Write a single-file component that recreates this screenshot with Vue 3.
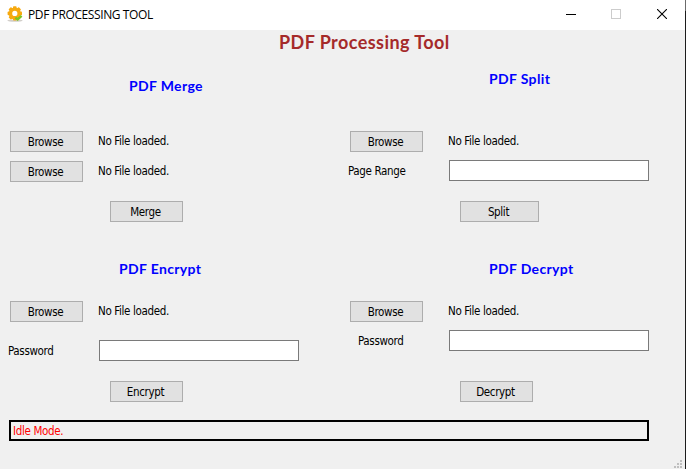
<script setup>
import { ref } from 'vue'

const range = ref('')
const encryptPassword = ref('')
const decryptPassword = ref('')
const fileText = ref('No File loaded.')
</script>

<template>
  <div class="window">
    <header class="titlebar">
      <svg class="app-icon" width="16" height="16" viewBox="0 0 16 16">
        <ellipse cx="8" cy="14.6" rx="7.6" ry="1.1" fill="#d2cfca" />
        <g fill="#f6a90f">
          <rect x="6" y="0.2" width="3.6" height="14.4" rx="0.8" />
          <rect x="6" y="0.2" width="3.6" height="14.4" rx="0.8" transform="rotate(45 7.8 7.4)" />
          <rect x="6" y="0.2" width="3.6" height="14.4" rx="0.8" transform="rotate(90 7.8 7.4)" />
          <rect x="6" y="0.2" width="3.6" height="14.4" rx="0.8" transform="rotate(135 7.8 7.4)" />
        </g>
        <circle cx="7.8" cy="7.4" r="4.3" fill="#fff" stroke="#f6a90f" stroke-width="3.4" />
        <path d="M8.3 11.6 L10.6 13.4 L14.6 9.9" fill="none" stroke="#7cc520" stroke-width="2.4" />
      </svg>
      <span class="title">PDF PROCESSING TOOL</span>
      <div class="controls">
        <svg width="10" height="10" viewBox="0 0 10 10" shape-rendering="crispEdges"><path d="M0 5.5H10" stroke="#000" /></svg>
        <svg width="10" height="10" viewBox="0 0 10 10"><rect x="0.5" y="0.5" width="9" height="9" fill="none" stroke="#ccc" /></svg>
        <svg class="close" width="10" height="10" viewBox="0 0 10 10"><path d="M0 0L10 10M10 0L0 10" stroke="#000" stroke-width="1.1" /></svg>
      </div>
    </header>

    <h1>PDF Processing Tool</h1>

    <main class="panels">
      <section class="panel">
        <h2 class="merge-head">PDF Merge</h2>
        <div class="row"><button>Browse</button><span class="file">{{ fileText }}</span></div>
        <div class="row second"><button>Browse</button><span class="file">{{ fileText }}</span></div>
        <div class="action merge-action"><button>Merge</button></div>
      </section>
      <section class="panel">
        <h2 class="split-head">PDF Split</h2>
        <div class="row"><button>Browse</button><span class="file wide">{{ fileText }}</span></div>
        <div class="row field"><label class="range">Page Range</label><input v-model="range" type="text" /></div>
        <div class="action split-action"><button class="split">Split</button></div>
      </section>
      <section class="panel">
        <h2 class="encrypt-head">PDF Encrypt</h2>
        <div class="row"><button>Browse</button><span class="file">{{ fileText }}</span></div>
        <div class="row field low"><label class="pass">Password</label><input v-model="encryptPassword" type="password" /></div>
        <div class="action encrypt-action"><button class="encrypt">Encrypt</button></div>
      </section>
      <section class="panel">
        <h2 class="decrypt-head">PDF Decrypt</h2>
        <div class="row"><button>Browse</button><span class="file wide">{{ fileText }}</span></div>
        <div class="row field"><label class="pass-right">Password</label><input v-model="decryptPassword" type="password" /></div>
        <div class="action decrypt-action"><button>Decrypt</button></div>
      </section>
    </main>

    <div class="status"><span>Idle Mode.</span></div>
    <svg class="grip" width="8" height="8" viewBox="0 0 8 8" fill="#bfbfbf" shape-rendering="crispEdges">
      <path d="M6 0h2v2h-2zM3 3h2v2h-2zM6 3h2v2h-2zM0 6h2v2h-2zM3 6h2v2h-2zM6 6h2v2h-2z" />
    </svg>
  </div>
</template>

<style>
body { margin: 0; overflow: hidden; }
</style>

<style scoped>
.window {
  box-sizing: border-box;
  width: 686px;
  height: 469px;
  display: flex;
  flex-direction: column;
  background: linear-gradient(#6b6b6b 11px, #1c1c1c 11px) right / 1px 100% no-repeat, #f0f0f0;
  font-family: "DejaVu Sans Condensed", "DejaVu Sans", sans-serif;
  font-stretch: condensed;
  font-size: 11.5px;
  letter-spacing: -0.35px;
  color: #000;
}
.titlebar {
  box-sizing: border-box;
  width: 685px;
  height: 30px;
  flex: none;
  display: flex;
  align-items: center;
  background: #fff;
  padding: 0 18px 0 7px;
}
.app-icon { margin-top: -3px; }
.title {
  margin: -2px 0 0 5px;
  font: 12px "Open Sans", sans-serif;
  letter-spacing: -0.4px;
  white-space: nowrap;
}
.controls { margin-left: auto; display: flex; gap: 35px; margin-top: -2px; }
.controls svg { display: block; }
.controls .close { margin-left: 1px; }
h1 {
  flex: none;
  height: 32px;
  margin: 0;
  padding-left: 279px;
  font: bold 18px/24px Lato, sans-serif;
  letter-spacing: 0.43px;
  color: #a52a2a;
}
.panels {
  flex: none;
  display: grid;
  grid-template-columns: 340px 345px;
  grid-template-rows: 190px 168px;
}
.panel { display: flex; flex-direction: column; }
h2 {
  flex: none;
  box-sizing: border-box;
  height: 69px;
  margin: 0;
  font: bold 14px/20px Lato, sans-serif;
  letter-spacing: 0.35px;
  color: #00f;
}
.merge-head { padding: 14px 0 0 129px; }
.split-head { padding: 7px 0 0 149px; }
.encrypt-head, .decrypt-head { height: 49px; padding-top: 7px; }
.encrypt-head { padding-left: 119px; }
.decrypt-head { padding-left: 149px; }
.row { display: flex; height: 21px; padding-left: 10px; }
.second { margin-top: 9px; }
.file { margin-left: 15px; line-height: 21px; white-space: nowrap; }
.file.wide { margin-left: 25px; }
button {
  box-sizing: border-box;
  width: 73px;
  height: 21px;
  padding: 1px 2px 0 0;
  border: 1px solid #adadad;
  border-radius: 0;
  background: #e1e1e1;
  color: #000;
  font: inherit;
  line-height: 19px;
  letter-spacing: inherit;
}
.row.field { margin-top: 8px; padding-left: 0; }
.row.low { margin-top: 18px; }
label { box-sizing: border-box; width: 109px; line-height: 23px; white-space: nowrap; }
.range { padding-left: 8px; }
.pass { width: 99px; padding-left: 8px; }
.pass-right { padding-left: 18px; }
input {
  box-sizing: border-box;
  width: 200px;
  height: 21px;
  padding: 1px 3px;
  border: 1px solid #7a7a7a;
  border-radius: 0;
  background: #fff;
  font: inherit;
  outline: none;
}
.action { display: flex; }
.merge-action { padding: 19px 0 0 110px; }
.split-action { padding: 20px 0 0 120px; }
.encrypt-action { padding: 20px 0 0 110px; }
.decrypt-action { padding: 30px 0 0 120px; }
.split { width: 79px; }
.status {
  flex: none;
  box-sizing: border-box;
  width: 640px;
  height: 21px;
  margin-left: 9px;
  padding-left: 2px;
  border: 2px solid #000;
  color: #f00;
  line-height: 19px;
}
.grip { flex: none; margin: auto 4px 1px auto; }
</style>
